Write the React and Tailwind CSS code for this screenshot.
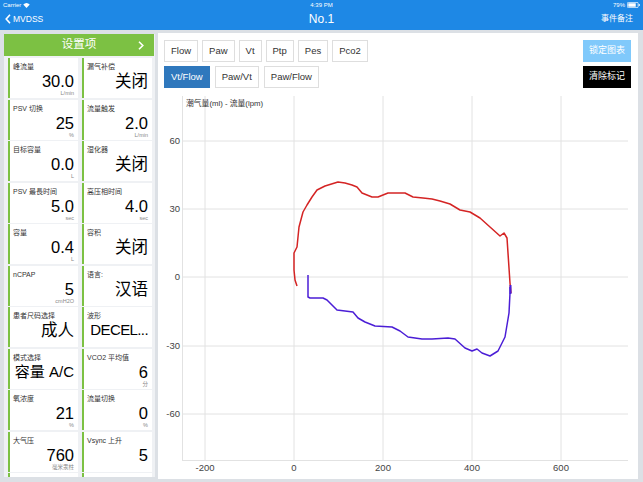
import React from 'react';

const cards = [
  ['峰流量', '30.0', 'L/min'], ['漏气补偿', '关闭', ''],
  ['PSV 切换', '25', '%'], ['流量触发', '2.0', 'L/min'],
  ['目标容量', '0.0', 'L'], ['湿化器', '关闭', ''],
  ['PSV 最長时间', '5.0', 'sec'], ['高压相时间', '4.0', 'sec'],
  ['容量', '0.4', 'L'], ['容积', '关闭', ''],
  ['nCPAP', '5', 'cmH2O'], ['语言:', '汉语', ''],
  ['患者尺码选择', '成人', ''], ['波形', 'DECEL...', ''],
  ['模式选择', '容量 A/C', ''], ['VCO2 平均值', '6', '分'],
  ['氧浓度', '21', '%'], ['流量切换', '0', '%'],
  ['大气压', '760', '毫米汞柱'], ['Vsync 上升', '5', ''],
  ['呼吸次数', '12', ''], ['触发灵敏度', '2', ''],
];

function Card({ label, value, unit }) {
  const isMode = value === '容量 A/C';
  const isDecel = value === 'DECEL...';
  return (
    <div className="h-[40px] bg-white border-l-2 border-[#7cc143] flex flex-col pl-[3px] pr-[4px] overflow-hidden">
      <div className="mt-[4px] h-[9px] leading-[9px] text-[7px] text-[#333] whitespace-nowrap">{label}</div>
      <div
        className={
          'mt-[1px] h-[18px] leading-[18px] text-black whitespace-nowrap text-right ' +
          (isMode ? 'text-[15px]' : isDecel ? 'text-[15px] tracking-[-0.6px]' : 'text-[16.5px]')
        }
      >
        {value}
      </div>
      <div className="h-[6px] leading-[6px] text-[5.5px] text-[#888] text-right whitespace-nowrap">{unit}</div>
    </div>
  );
}

function Btn({ children, active }) {
  return (
    <div
      className={
        'h-[22px] px-[6px] border flex items-center text-[9.5px] whitespace-nowrap ' +
        (active ? 'bg-[#2f78bd] border-[#2f78bd] text-white' : 'bg-white border-[#dedede] text-[#333]')
      }
    >
      {children}
    </div>
  );
}

const red = [
  [297, 286], [295, 280], [294, 270], [294, 253], [297, 247], [299, 227], [303, 212], [307, 205],
  [312, 197], [317, 190], [325, 186], [338, 182], [345, 183], [352, 185], [357, 187], [362, 193],
  [372, 197], [378, 197], [388, 193], [395, 193], [405, 193], [413, 197], [423, 198], [432, 199],
  [440, 201], [450, 204], [460, 210], [470, 212], [480, 218], [490, 227], [500, 236], [504, 233],
  [507, 238], [510, 283], [511, 293],
];
const blue = [
  [308, 275], [308, 297], [310, 298], [323, 298], [327, 300], [337, 310], [353, 312], [358, 318],
  [365, 322], [375, 326], [392, 327], [400, 331], [408, 337], [422, 339], [432, 339], [448, 338],
  [455, 339], [465, 348], [472, 351], [477, 349], [482, 353], [490, 356], [498, 351], [505, 337],
  [509, 313], [510, 293], [510, 287],
];
const pts = (a) => a.map((p) => p.join(',')).join(' ');

function Chart() {
  const vx = [205, 294, 383, 472, 561];
  const xl = ['-200', '0', '200', '400', '600'];
  const hy = [141, 209, 277, 346, 414];
  const yl = ['60', '30', '0', '-30', '-60'];
  const ff = '"Liberation Sans", "Noto Sans CJK SC", sans-serif';
  return (
    <svg className="block mt-[4px]" width="480" height="386" viewBox="158 92 480 386">
      {vx.map((x) => (
        <line key={x} x1={x} y1={96} x2={x} y2={460} stroke="#e2e2e2" strokeWidth="1" />
      ))}
      {hy.map((y) => (
        <line key={y} x1={182} y1={y} x2={628} y2={y} stroke="#e2e2e2" strokeWidth="1" />
      ))}
      <line x1={182.5} y1={96} x2={182.5} y2={460} stroke="#e2e2e2" strokeWidth="1" />
      <line x1={182} y1={460.5} x2={628} y2={460.5} stroke="#e2e2e2" strokeWidth="1" />
      {hy.map((y, i) => (
        <text key={y} x={180} y={y + 3.3} textAnchor="end" fontSize="9.5" fill="#444" fontFamily={ff}>
          {yl[i]}
        </text>
      ))}
      {vx.map((x, i) => (
        <text key={x} x={x} y={471} textAnchor="middle" fontSize="9.5" fill="#444" fontFamily={ff}>
          {xl[i]}
        </text>
      ))}
      <text x={186} y={106} fontSize="7.8" fill="#333" fontFamily={ff}>
        潮气量(ml) - 流量(lpm)
      </text>
      <polyline points={pts(red)} fill="none" stroke="#d42424" strokeWidth="1.5" strokeLinejoin="round" />
      <polyline points={pts(blue)} fill="none" stroke="#4b1ed6" strokeWidth="1.5" strokeLinejoin="round" />
      <line x1={510.5} y1={285} x2={510.5} y2={294} stroke="#4b1ed6" strokeWidth="2" />
    </svg>
  );
}

export default function App() {
  return (
    <div className="w-[643px] h-[482px] overflow-hidden bg-[#dce0e5] font-['Liberation_Sans','Noto_Sans_CJK_SC',sans-serif]">
      <div className="h-[30px] bg-[#1e88e5] text-white">
        <div className="h-[10px] flex items-center justify-between px-[3px] text-[6px] leading-[10px]">
          <div className="w-[60px] flex items-center gap-[2px]">
            <span>Carrier</span>
            <svg width="7" height="5" viewBox="0 0 14 10">
              <path d="M7 10 L0.5 3.2 A9.5 9.5 0 0 1 13.5 3.2 Z" fill="white" />
            </svg>
          </div>
          <div>4:39 PM</div>
          <div className="w-[60px] flex items-center justify-end gap-[2px]">
            <span>79%</span>
            <svg width="13" height="6" viewBox="0 0 26 12">
              <rect x="0.75" y="0.75" width="21.5" height="10.5" rx="2" fill="none" stroke="white" strokeWidth="1.5" />
              <rect x="2.5" y="2.5" width="15" height="7" fill="white" />
              <rect x="23.5" y="4" width="2" height="4" fill="white" />
            </svg>
          </div>
        </div>
        <div className="h-[18px] flex items-center justify-between px-[5px]">
          <div className="w-[80px] flex items-center gap-[2px] text-[8.5px]">
            <svg width="6" height="10" viewBox="0 0 6 10">
              <polyline points="5,0.8 1.2,5 5,9.2" fill="none" stroke="white" strokeWidth="1.6" />
            </svg>
            <span>MVDSS</span>
          </div>
          <div className="text-[12px] font-medium">No.1</div>
          <div className="w-[80px] text-right text-[8px] pr-[5px]">事件备注</div>
        </div>
      </div>
      <div className="flex items-start pl-[4px] gap-[3px]">
        <div className="mt-[4px] w-[151px] h-[443px] bg-[#eff1f4] overflow-hidden">
          <div className="w-[150px] h-[22px] bg-[#7cc143] text-white flex items-center relative">
            <div className="flex-1 text-center text-[11.5px]">设置项</div>
            <svg className="absolute left-[134px] top-[7px]" width="6" height="9" viewBox="0 0 6 9">
              <polyline points="1,0.8 4.8,4.5 1,8.2" fill="none" stroke="white" strokeWidth="1.6" />
            </svg>
          </div>
          <div className="grid grid-cols-[70px_70px] gap-x-[4px] gap-y-[1.5px] pl-[4px] pt-[2px]">
            {cards.map((c, i) => (
              <Card key={i} label={c[0]} value={c[1]} unit={c[2]} />
            ))}
          </div>
        </div>
        <div className="mt-[3px] w-[480px] h-[446px] bg-white flex flex-col">
          <div className="flex justify-between pt-[7px] pl-[6px] pr-[7px]">
            <div className="flex flex-col gap-[4px]">
              <div className="flex gap-[4px]">
                <Btn>Flow</Btn>
                <Btn>Paw</Btn>
                <Btn>Vt</Btn>
                <Btn>Ptp</Btn>
                <Btn>Pes</Btn>
                <Btn>Pco2</Btn>
              </div>
              <div className="flex gap-[5px]">
                <Btn active>Vt/Flow</Btn>
                <Btn>Paw/Vt</Btn>
                <Btn>Paw/Flow</Btn>
              </div>
            </div>
            <div className="flex flex-col gap-[4px]">
              <div className="w-[48px] h-[22px] bg-[#80c9fb] text-white text-[9px] flex items-center justify-center">锁定图表</div>
              <div className="w-[48px] h-[22px] bg-black text-white text-[9px] flex items-center justify-center">清除标记</div>
            </div>
          </div>
          <Chart />
        </div>
      </div>
    </div>
  );
}
